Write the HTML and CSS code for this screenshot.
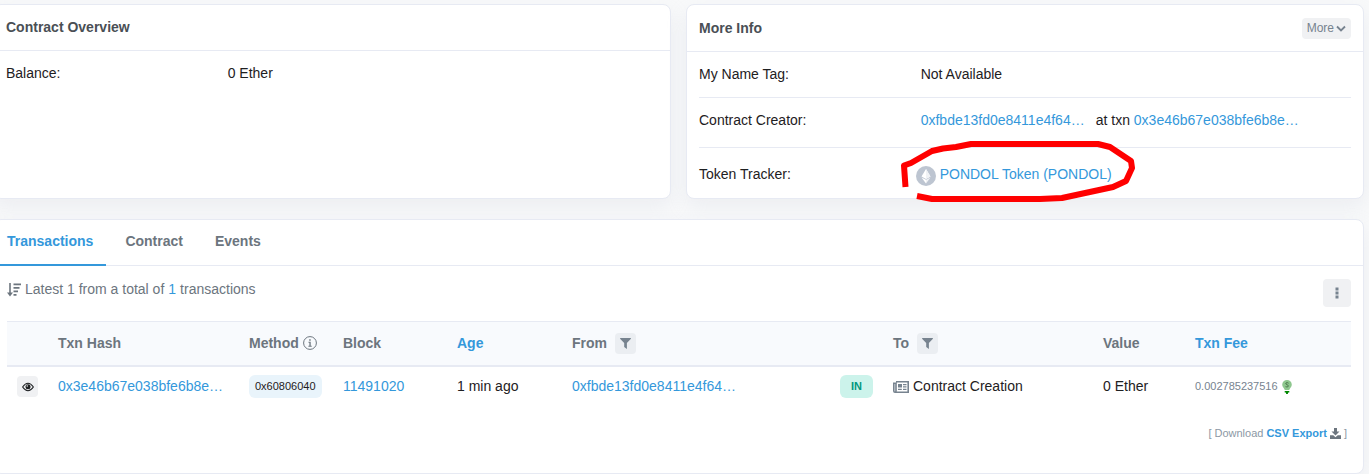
FILE: index.html
```html
<!DOCTYPE html>
<html lang="en">
<head>
<meta charset="utf-8">
<title>Contract</title>
<link rel="stylesheet" href="styles.css">
</head>
<body>
<main class="page">
  <div class="summary">
    <section class="card">
      <header class="card-header"><h2 class="card-title">Contract Overview</h2></header>
      <dl class="info">
        <div class="info-row"><dt>Balance:</dt><dd>0 Ether</dd></div>
      </dl>
    </section>
    <section class="card">
      <header class="card-header with-action">
        <h2 class="card-title">More Info</h2>
        <button class="more" type="button">More
          <svg width="10" height="7" viewBox="0 0 10 7"><path d="M1 1.500l4 4 4-4" fill="none" stroke="currentColor" stroke-width="1.800"/></svg>
        </button>
      </header>
      <dl class="info">
        <div class="info-row"><dt>My Name Tag:</dt><dd>Not Available</dd></div>
        <div class="info-row creator"><dt>Contract Creator:</dt><dd class="creator-value"><a href="#">0xfbde13fd0e8411e4f64…</a><span>at txn <a href="#">0x3e46b67e038bfe6b8e…</a></span></dd></div>
        <div class="info-row tracker"><dt>Token Tracker:</dt>
          <dd class="token">
            <svg class="token-icon" width="20" height="20" viewBox="0 0 20 20"><circle cx="10" cy="10" r="10" fill="#bdc5d1"/><path d="M10 3L5.500 10.500 10 13l4.500-2.500z" fill="#fff"/><path d="M10 3v10l4.500-2.500z" fill="#f0f2f5"/><path d="M5.500 11.500L10 17.500v-3.700z" fill="#fff"/><path d="M10 13.800v3.700l4.500-6z" fill="#f0f2f5"/></svg>
            <a href="#">PONDOL Token (PONDOL)</a>
            <svg class="marking" width="236" height="66" viewBox="900 138 236 66"><path d="M905.500 187L904 165.500 911 163 932 151 943 148.500 956 147 971 144H1098L1110 147 1131 161 1132 168 1126 181 1113 187 1062 198 1040 199H932L917 196" fill="none" stroke="#f00" stroke-width="6" stroke-linejoin="round"/></svg>
          </dd></div>
      </dl>
    </section>
  </div>

  <section class="card transactions">
    <nav class="tabs">
      <a class="tab active" href="#">Transactions</a>
      <a class="tab" href="#">Contract</a>
      <a class="tab" href="#">Events</a>
    </nav>
    <div class="panel">
      <div class="toolbar">
        <p class="latest"><svg width="14" height="14" viewBox="0 0 14 14"><path d="M3 0v11" fill="none" stroke="currentColor" stroke-width="1.600"/><path d="M0 9.500h6L3 13.500zM6.500.500H14v1.700H6.500zM6.500 4h6v1.700h-6zM6.500 7.500H11v1.700H6.500zM6.500 11h3v1.700h-3z" fill="currentColor"/></svg>Latest 1 from a total of <a href="#">1</a> transactions</p>
        <button class="kebab" type="button" aria-label="Options"><svg width="4" height="12" viewBox="0 0 4 12"><path d="M.500.500h3v3h-3zM.500 4.500h3v3h-3zM.500 8.500h3v3h-3z" fill="currentColor"/></svg></button>
      </div>
      <table class="table">
        <colgroup><col class="c-view"><col class="c-hash"><col class="c-method"><col class="c-block"><col class="c-age"><col class="c-from"><col class="c-dir"><col class="c-to"><col class="c-value"><col class="c-fee"></colgroup>
        <thead><tr>
          <th></th><th>Txn Hash</th>
          <th><span class="group">Method <svg width="14" height="14" viewBox="0 0 14 14"><circle cx="7" cy="7" r="6.400" fill="none" stroke="currentColor"/><path d="M6.200 3.200h1.500v1.500H6.200zM5.500 5.800h2.200v4h1v.900H5.400v-.900h1V6.700h-.900z" fill="currentColor"/></svg></span></th>
          <th>Block</th><th><a href="#">Age</a></th>
          <th><span class="group filterable">From <button class="square" type="button" aria-label="Filter from"><svg width="11" height="11" viewBox="0 0 11 11"><path d="M.300 0h10.400q.500.600 0 1L6.900 5v6L4.200 9V5L.300 1q-.400-.500 0-1z" fill="currentColor"/></svg></button></span></th>
          <th></th>
          <th><span class="group filterable">To <button class="square" type="button" aria-label="Filter to"><svg width="11" height="11" viewBox="0 0 11 11"><path d="M.300 0h10.400q.500.600 0 1L6.900 5v6L4.200 9V5L.300 1q-.400-.500 0-1z" fill="currentColor"/></svg></button></span></th>
          <th>Value</th><th><a href="#">Txn Fee</a></th>
        </tr></thead>
        <tbody><tr>
          <td><button class="square eye" type="button" aria-label="Preview"><svg width="12" height="10" viewBox="0 0 12 10"><path d="M.600 5Q6-2.400 11.400 5 6 12.400.600 5z" fill="none" stroke="currentColor" stroke-width="1.100"/><circle cx="6" cy="4.800" r="2.500" fill="currentColor"/><circle cx="5.200" cy="4" r=".700" fill="#fff"/></svg></button></td>
          <td><a href="#">0x3e46b67e038bfe6b8e…</a></td>
          <td><span class="badge method">0x60806040</span></td>
          <td><a href="#">11491020</a></td>
          <td>1 min ago</td>
          <td><a href="#">0xfbde13fd0e8411e4f64…</a></td>
          <td><span class="badge in">IN</span></td>
          <td><span class="group creation"><svg width="16" height="12" viewBox="0 0 16 12"><path d="M3 .800h12.200v10.400H2Q.800 11.200.800 10V2.200H3V10q0 1.200-1 1.200" fill="none" stroke="currentColor" stroke-width="1.600"/><path d="M5 3h4v3.500H5zM10 3h3.500v1.300H10zM10 5.300h3.500v1.300H10zM5 7.700h3.800V9H5zM10 7.700h3.500V9H10z" fill="currentColor"/></svg>Contract Creation</span></td>
          <td>0 Ether</td>
          <td><span class="group fee">0.002785237516 <svg width="10" height="14" viewBox="0 0 10 14"><path d="M5 0a4.800 4.800 0 0 0-4.800 4.700C.200 7 2.300 8.300 2.800 10h4.400c.500-1.700 2.600-3 2.600-5.300A4.800 4.800 0 0 0 5 0z" fill="#8ec78e"/><path d="M6.600 3.200Q5 2 3.900 3q-.600 1.200 1.100 1.700 1.800.500 1.200 1.800-1 1-2.700.100" fill="none" stroke="#3d6b3d" stroke-width=".800"/><path d="M2.700 11h4.600v1.500H6.200L5.800 14H4.200l-.400-1.500H2.700z" fill="#080"/></svg></span></td>
        </tr></tbody>
      </table>
      <p class="export">[ Download <a href="#">CSV Export</a> <svg width="11" height="11" viewBox="0 0 11 11"><path d="M4 0h3v3.600h2.500L5.500 7.600 1.500 3.600H4zM0 7.300h3.300l2.200 2 2.200-2H11V11H0z" fill="currentColor"/></svg> ]</p>
    </div>
  </section>
</main>
</body>
</html>
```

FILE: styles.css
```css
* { box-sizing: border-box; }
html { overflow: hidden; }
body {
  margin: 0;
  background: #f8f9fa;
  color: #1e2022;
  font: 14px/21px "Liberation Sans", Arial, sans-serif;
}
a { color: #3498db; text-decoration: none; }
p, h2, dl, dd { margin: 0; }
button {
  display: inline-flex;
  align-items: center;
  justify-content: center;
  border: 0;
  padding: 0;
  border-radius: 4px;
  background: #f0f1f3;
  color: #77838f;
  font: inherit;
}
svg { flex: none; }

.page {
  display: flex;
  flex-direction: column;
  gap: 20px;
  margin: 4px 5px 0 -7px;
}
.summary { display: grid; grid-template-columns: 1fr 1fr; gap: 15px; }
.card {
  min-width: 0;
  border: 1px solid #e7eaf3;
  border-radius: 8px;
  background: #fff;
  box-shadow: 0 8px 20px rgba(189, 197, 209, 0.2);
}
.card-header {
  display: flex;
  align-items: center;
  justify-content: space-between;
  padding: 12px;
  border-bottom: 1px solid #e7eaf3;
}
.card-header.with-action { padding-top: 13px; }
.card-title { color: #4a4f55; font-size: 14px; line-height: 21px; }
.more { gap: 2px; height: 21px; padding: 0 5px; font-size: 12px; }

.info { padding: 0 12px; }
.info-row { display: flex; padding: 12px 0; }
.info-row + .info-row { border-top: 1px solid #e7eaf3; }
.info dt { flex: none; width: 34%; }
.info-row.creator { padding-bottom: 16px; }
.info-row.tracker { padding: 16px 0 12px; }
.creator-value { display: flex; gap: 11px; white-space: nowrap; }
.token { position: relative; display: flex; gap: 4px; margin-left: -5px; }
.token-icon { margin-top: 2px; }
.marking { position: absolute; left: -16px; top: -26px; pointer-events: none; }

.tabs { display: flex; gap: 6px; border-bottom: 1px solid #e7eaf3; }
.tab {
  margin-bottom: -1px;
  padding: 11px 13px 12px;
  border-bottom: 2px solid transparent;
  color: #6c757e;
  font-weight: bold;
}
.tab.active { border-color: #3498db; color: #3498db; }

.panel { padding: 13px 12px 29px 13px; }
.toolbar { display: flex; justify-content: space-between; margin-bottom: 14px; }
.latest { display: flex; align-items: center; gap: 4px; height: 21px; color: #6c757e; }
.kebab { width: 28px; height: 28px; }

.table { width: 100%; table-layout: fixed; border-collapse: collapse; }
.table th, .table td { padding: 0 0 0 10px; text-align: left; white-space: nowrap; }
.table th {
  height: 44px;
  border-top: 1px solid #e7eaf3;
  border-bottom: 2px solid #e7eaf3;
  background: #f8fafd;
  color: #6c757e;
}
.table td { height: 41px; }
.c-view { width: 41px; }
.c-hash { width: 191px; }
.c-method { width: 94px; }
.c-block { width: 114px; }
.c-age { width: 115px; }
.c-from { width: 268px; }
.c-dir { width: 53px; }
.c-to { width: 210px; }
.c-value { width: 92px; }
.c-fee { width: 166px; }
.group { display: flex; align-items: center; gap: 4px; }
.filterable { gap: 8px; }
.square { width: 21px; height: 21px; background: #ebeef2; }
.eye { background: #f0f1f3; color: #1e2022; vertical-align: middle; }
.badge {
  display: inline-block;
  border-radius: 6px;
  font-size: 11px;
  line-height: 23px;
  vertical-align: middle;
}
.method { padding: 0 6px; background: #e9f4fb; }
.in { padding: 0 11px; background: #ccf3eb; color: #02977e; font-weight: bold; }
.creation svg { color: #77838f; }
.fee { color: #77838f; font-size: 11px; }
.export {
  display: flex;
  align-items: center;
  justify-content: flex-end;
  gap: 3px;
  margin-top: 16px;
  padding-right: 4px;
  color: #8c98a4;
  font-size: 11px;
}
.export a { font-weight: bold; }
.export svg { color: #6c757e; }
```
